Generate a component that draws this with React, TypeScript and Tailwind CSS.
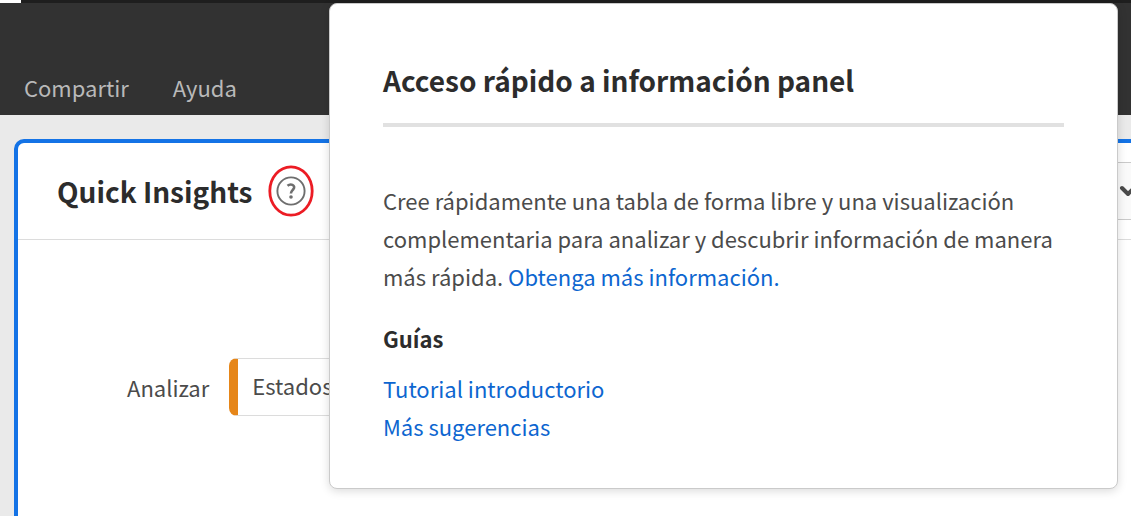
import { ChevronDown } from "lucide-react";

const menuItems = ["Compartir", "Ayuda"];
const guides = ["Tutorial introductorio", "Más sugerencias"];

function TopBar() {
  return (
    <header>
      <div className="flex h-[3px] bg-[#1e1e1e]">
        <div className="w-[21px] bg-white" />
      </div>
      <nav className="flex h-28 items-end gap-11 bg-[#323232] px-6 pb-2.5">
        {menuItems.map((item) => (
          <button key={item} type="button" className="text-[22px] leading-9 text-[#b9b9b9]">
            {item}
          </button>
        ))}
      </nav>
    </header>
  );
}

function HelpButton() {
  return (
    <button type="button" aria-label="Ayuda de Quick Insights" className="shrink-0">
      <svg width="46" height="52" viewBox="0 0 46 52" fill="none">
        <ellipse cx="23" cy="26" rx="21.2" ry="24.2" stroke="#ec1c24" strokeWidth="2.8" />
        <circle cx="23" cy="26" r="13.6" stroke="#6e6e6e" strokeWidth="1.9" />
        <path
          d="M19.5 20.8C21 19.6 23 19.3 24.5 19.9C26.4 20.7 26.6 22.8 25.4 24.2C24.2 25.6 22.9 26.2 22.9 28.6"
          stroke="#6e6e6e"
          strokeWidth="2.6"
        />
        <circle cx="23" cy="32" r="1.8" fill="#6e6e6e" />
      </svg>
    </button>
  );
}

function QuickInsightsPanel() {
  return (
    <section className="ml-3.5 flex grow flex-col rounded-tl-[10px] border-t-4 border-l-4 border-[#1473e6] bg-white">
      <div className="flex h-[97px] shrink-0 items-center border-b border-[#dcdcdc] pl-[39px]">
        <h1 className="text-[28px] leading-10 font-bold whitespace-nowrap text-[#2c2c2c]">
          Quick Insights
        </h1>
        <div className="ml-4 flex">
          <HelpButton />
        </div>
        <button
          type="button"
          aria-label="Opciones"
          className="ml-auto flex h-[58px] w-20 items-center border-y border-[#cacaca] bg-[#fafafa] pl-[65px]"
        >
          <ChevronDown size={24} strokeWidth={4} className="shrink-0 text-[#4b4b4b]" />
        </button>
      </div>
      <div className="flex items-center gap-5 pt-[118px] pl-[109px]">
        <label htmlFor="analizar" className="text-[22px] leading-9 text-[#4b4b4b]">
          Analizar
        </label>
        <input
          id="analizar"
          type="text"
          defaultValue="Estados"
          className="h-[58px] w-80 rounded-l-lg border border-l-[9px] border-[#dcdcdc] border-l-[#e68619] bg-white pb-1 pl-3.5 text-[22px] text-[#4b4b4b]"
        />
      </div>
    </section>
  );
}

function HelpPopover() {
  return (
    <div
      role="dialog"
      aria-labelledby="popover-title"
      className="absolute top-[3px] right-[13px] left-[329px] rounded-lg border border-[#cacaca] bg-white px-[53px] pt-14 pb-[43px] text-[22px] leading-[38px] text-[#4b4b4b] shadow-[0_2px_10px_rgba(0,0,0,0.15)]"
    >
      <h2 id="popover-title" className="text-[28px] leading-10 font-bold text-[#2c2c2c]">
        Acceso rápido a información panel
      </h2>
      <hr className="mt-[23px] border-t-4 border-[#e1e1e1]" />
      <p className="mt-[54px]">
        Cree rápidamente una tabla de forma libre y una visualización complementaria para analizar y
        descubrir información de manera más rápida.{" "}
        <a href="#informacion" className="text-[#0d66d0]">
          Obtenga más información.
        </a>
      </p>
      <h3 className="mt-6 font-bold text-[#2c2c2c]">Guías</h3>
      <ul className="mt-3">
        {guides.map((guide) => (
          <li key={guide}>
            <a href="#guias" className="text-[#0d66d0]">
              {guide}
            </a>
          </li>
        ))}
      </ul>
    </div>
  );
}

export default function App() {
  return (
    <div className="relative flex min-h-screen flex-col overflow-hidden bg-[#eaeaea] font-['Noto_Sans_CJK_SC','Noto_Sans',sans-serif]">
      <TopBar />
      <main className="flex grow flex-col pt-6">
        <QuickInsightsPanel />
      </main>
      <HelpPopover />
    </div>
  );
}
